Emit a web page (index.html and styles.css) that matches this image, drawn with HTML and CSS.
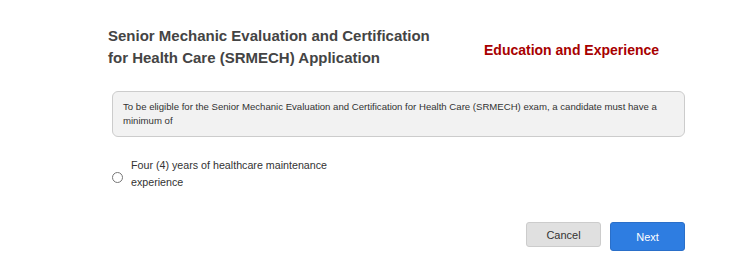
FILE: index.html
```html
<!DOCTYPE html>
<html lang="en">
<head>
    <meta charset="UTF-8">
    <meta name="viewport" content="width=device-width, initial-scale=1.0">
    <title>SRMECH Application</title>
    <link rel="stylesheet" href="styles.css">
</head>
<body>
    <div class="wrapper">
        <div class="header">
            <h2>Senior Mechanic Evaluation and Certification<br>for Health Care (SRMECH) Application</h2>
            <h3>Education and Experience</h3>
        </div>

        <div class="notice">
            To be eligible for the Senior Mechanic Evaluation and Certification for Health Care (SRMECH) exam, a candidate must have a minimum of
        </div>

        <div class="option">
            <input type="radio" id="years" name="experience">
            <label for="years">Four (4) years of healthcare maintenance<br>experience</label>
        </div>

        <div class="actions">
            <button type="button" class="cancel">Cancel</button>
            <button type="submit" class="next">Next</button>
        </div>
    </div>
</body>
</html>
```

FILE: styles.css
```css
body {
    font-family: "Liberation Sans", Arial, sans-serif;
    background-color: white;
    margin: 0;
    color: #333;
}

.wrapper {
    width: 577px;
    padding: 25px 0 0 108px;
}

.header {
    display: flex;
    align-items: flex-end;
}

h2 {
    margin: 0;
    width: 376px;
    font-size: 15px;
    line-height: 22px;
    color: #444;
}

h3 {
    margin: 0 0 11px 0;
    font-size: 14px;
    color: #a80000;
}

.notice {
    margin: 22px 0 0 4px;
    padding: 8px 10px 8px 10px;
    background: #f2f2f2;
    border: 1px solid #ccc;
    border-radius: 6px;
    font-size: 9.6px;
    line-height: 14px;
}

.option {
    display: flex;
    align-items: center;
    margin-top: 20px;
}

.option input {
    width: 11px;
    height: 11px;
    margin: 7px 8px 0 4px;
}

.option label {
    font-size: 10.7px;
    line-height: 17px;
}

.actions {
    display: flex;
    justify-content: flex-end;
    align-items: flex-start;
    gap: 9px;
    margin-top: 31px;
}

button {
    width: 75px;
    font-family: "Liberation Sans", Arial, sans-serif;
    font-size: 11px;
    border-radius: 3px;
    cursor: pointer;
}

.cancel {
    height: 25px;
    background: #e0e0e0;
    border: 1px solid #ccc;
    color: #333;
}

.next {
    height: 29px;
    background: #2e7de1;
    border: 1px solid #2a6fc9;
    color: white;
}
```
